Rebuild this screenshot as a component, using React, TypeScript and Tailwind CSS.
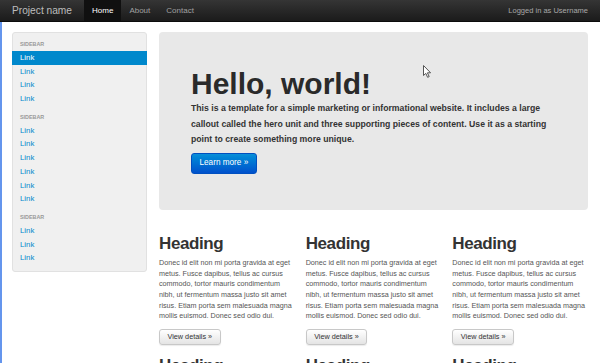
const SANS = "font-['Liberation_Sans',Arial,sans-serif]";

const GROUPS = [
  { title: 'Sidebar', links: 4, active: 0 },
  { title: 'Sidebar', links: 6, active: -1 },
  { title: 'Sidebar', links: 3, active: -1 },
];

const BODY =
  'Donec id elit non mi porta gravida at eget metus. Fusce dapibus, tellus ac cursus commodo, tortor mauris condimentum nibh, ut fermentum massa justo sit amet risus. Etiam porta sem malesuada magna mollis euismod. Donec sed odio dui.';

function Navbar() {
  return (
    <div className="h-[22px] flex items-stretch justify-between px-[12px] bg-linear-to-b from-[#353535] to-[#1b1b1b] border-b border-[#0c0c0c]">
      <div className="flex items-stretch">
        <span className="flex items-center pr-[12px] text-[10.2px] text-[#bdbdbd]">Project name</span>
        <span className="flex items-center px-[8px] bg-[#101010] text-[8px] text-white">Home</span>
        <span className="flex items-center px-[8px] text-[8px] text-[#a0a0a0]">About</span>
        <span className="flex items-center px-[8px] text-[8px] text-[#a0a0a0]">Contact</span>
      </div>
      <span className="flex items-center text-[7.5px] text-[#a8a8a8]">Logged in as Username</span>
    </div>
  );
}

function Sidebar() {
  return (
    <div className="w-[135px] shrink-0 self-start bg-[#f0f0f0] border border-[#e1e1e1] rounded-[3px] pt-[5px] pb-[6px]">
      {GROUPS.map((g, gi) => (
        <div key={gi} className={gi > 0 ? 'mt-[5px]' : ''}>
          <div className="h-[13px] flex items-center px-[7px] text-[5.4px] font-bold uppercase text-[#999]">
            {g.title}
          </div>
          {Array.from({ length: g.links }).map((_, i) => (
            <div
              key={i}
              className={
                i === g.active
                  ? 'h-[13.7px] flex items-center -mx-px px-[8px] bg-[#0088cc] text-white text-[7.8px]'
                  : 'h-[13.7px] flex items-center px-[7px] text-[#0088cc] text-[7.8px]'
              }
            >
              Link
            </div>
          ))}
        </div>
      ))}
    </div>
  );
}

function Cursor() {
  return (
    <svg className="absolute left-[264px] top-[33px]" width="9" height="13" viewBox="0 0 9 13">
      <path
        d="M0.5 0.5 L0.5 10.5 L2.8 8.4 L4.6 12.3 L6.2 11.6 L4.4 7.8 L7.6 7.8 Z"
        fill="#fff"
        stroke="#555"
        strokeWidth="1"
        strokeLinejoin="round"
      />
    </svg>
  );
}

function Hero() {
  return (
    <div className="relative bg-[#e8e8e8] rounded-[4px] px-[32px] pt-[37px] pb-[36px]">
      <Cursor />
      <h1 className="text-[30px] leading-[30px] font-bold text-[#2a2a2a]">Hello, world!</h1>
      <p className="mt-[2px] text-[8.7px] leading-[15.7px] font-bold text-[#333]">
        This is a template for a simple marketing or informational website. It includes a large
        callout called the hero unit and three supporting pieces of content. Use it as a starting
        point to create something more unique.
      </p>
      <button className="mt-[4.7px] h-[20.7px] px-[7.5px] rounded-[3px] border border-[#0050c0] bg-linear-to-b from-[#0a8fd8] to-[#0050cc] text-white text-[8.2px]">
        Learn more »
      </button>
    </div>
  );
}

function Column() {
  return (
    <div>
      <h2 className="text-[17px] leading-[20px] font-bold tracking-[-0.4px] text-[#333]">Heading</h2>
      <p className="mt-[3.6px] text-[7.2px] leading-[10.66px] text-[#555]">{BODY}</p>
      <button className="mt-[5px] h-[16px] px-[7.5px] rounded-[3px] border border-[#c8c8c8] bg-linear-to-b from-white to-[#e4e4e4] text-[7.25px] text-[#333] shadow-[0_1px_1px_rgba(0,0,0,0.08)]">
        View details »
      </button>
    </div>
  );
}

export default function App() {
  return (
    <div className={`${SANS} min-h-[363px] bg-white`}>
      <Navbar />
      <div className="border-l-2 border-[#6495ed] min-h-[341px] flex gap-[12px] pl-[10px] pr-[12px] pt-[10px]">
        <Sidebar />
        <div className="flex-1 min-w-0">
          <Hero />
          <div className="grid grid-cols-3 gap-x-[11px] mt-[24.8px]">
            <Column />
            <Column />
            <Column />
          </div>
          <div className="grid grid-cols-3 gap-x-[11px] mt-[10px]">
            <Column />
            <Column />
            <Column />
          </div>
        </div>
      </div>
    </div>
  );
}
